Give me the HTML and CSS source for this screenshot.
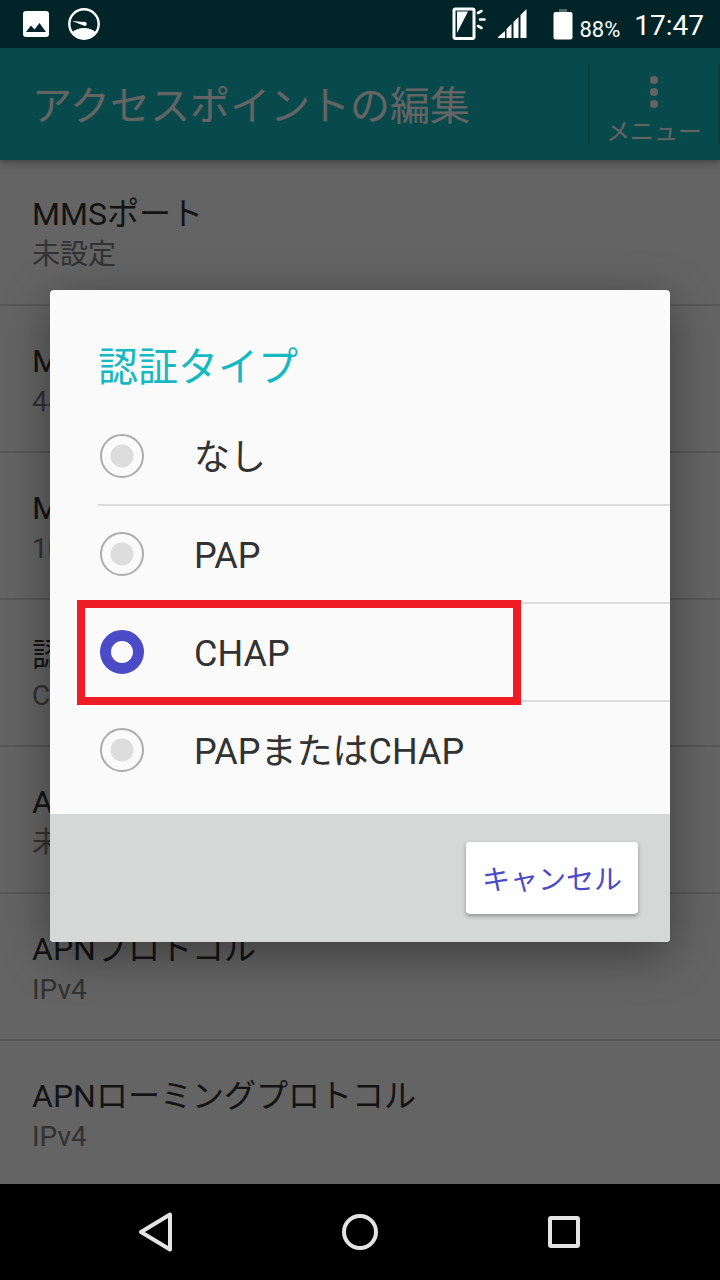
FILE: index.html
```html
<!DOCTYPE html>
<html lang="ja">
<head>
<meta charset="utf-8">
<meta name="viewport" content="width=device-width, initial-scale=1">
<title>アクセスポイントの編集</title>
<link rel="stylesheet" href="styles.css">
</head>
<body>
<div class="phone">
  <div class="status-bar">
    <div class="status-group">
      <svg class="status-icon" width="28" height="28" viewBox="0 0 28 28" aria-hidden="true">
        <rect x="1" y="1" width="26" height="26" rx="3" fill="#fff"/>
        <path d="M4 22L9 15.500L12.500 19.500L17.500 13L24 22Z" fill="#002428"/>
      </svg>
      <svg class="status-icon" width="32" height="32" viewBox="0 0 32 32" aria-hidden="true">
        <circle cx="16" cy="16" r="14.700" fill="none" stroke="#fff" stroke-width="2.400"/>
        <path d="M4.500 24Q9.500 20 16 20T27.500 24Q23 31 16 31T4.500 24Z" fill="#fff"/>
        <path d="M4 13L16 14A2 2 0 1 1 15.500 17.500Z" fill="#fff"/>
      </svg>
    </div>
    <div class="status-group status-right">
      <svg width="34" height="34" viewBox="0 0 34 34" aria-hidden="true">
        <rect x="2" y="2" width="20" height="29.500" rx="1.500" fill="none" stroke="#fff" stroke-width="3"/>
        <path d="M5 4.500H16L5 26Z" fill="#fff"/>
        <path d="M26 6L29.500 4M28 12.500H32.500M26 19L29.500 21" stroke="#fff" stroke-width="2.600" stroke-linecap="round"/>
      </svg>
      <svg class="signal" width="30" height="30" viewBox="0 0 30 30" aria-hidden="true">
        <path d="M0 29V28L7 22V29ZM8.500 29V20L13.500 15V29ZM15.500 29V13L20.500 8V29ZM22.500 29V6L28.500 0V29Z" fill="#fff"/>
      </svg>
      <svg class="battery" width="20" height="32" viewBox="0 0 20 32" aria-hidden="true">
        <rect x="6" y="1" width="8" height="4" fill="#4d666a"/>
        <rect x="0.500" y="4" width="19" height="27.500" rx="2" fill="#fff"/>
      </svg>
      <span class="battery-level">88%</span>
      <time class="clock">17:47</time>
    </div>
  </div>

  <main class="screen">
    <header class="app-bar">
      <h1 class="app-title">アクセスポイントの編集</h1>
      <button class="menu-button" type="button">
        <svg class="menu-dots" width="8" height="32" viewBox="0 0 8 32" aria-hidden="true">
          <circle cx="4" cy="4" r="4" fill="#fafafa"/><circle cx="4" cy="16" r="4" fill="#fafafa"/><circle cx="4" cy="28" r="4" fill="#fafafa"/>
        </svg>
        <span>メニュー</span>
      </button>
    </header>
    <ul class="settings">
      <li class="setting"><span class="setting-name">MMSポート</span><span class="setting-value">未設定</span></li>
      <li class="setting"><span class="setting-name">MCC</span><span class="setting-value">440</span></li>
      <li class="setting"><span class="setting-name">MNC</span><span class="setting-value">10</span></li>
      <li class="setting"><span class="setting-name">認証タイプ</span><span class="setting-value">CHAP</span></li>
      <li class="setting"><span class="setting-name">APNタイプ</span><span class="setting-value">未設定</span></li>
      <li class="setting"><span class="setting-name">APNプロトコル</span><span class="setting-value">IPv4</span></li>
      <li class="setting"><span class="setting-name">APNローミングプロトコル</span><span class="setting-value">IPv4</span></li>
    </ul>

    <div class="scrim">
      <form class="dialog" role="dialog" aria-labelledby="dialog-title">
        <h2 class="dialog-title" id="dialog-title">認証タイプ</h2>
        <div class="options">
          <label class="option"><input class="radio" type="radio" name="auth"><span class="option-label">なし</span></label>
          <label class="option"><input class="radio" type="radio" name="auth"><span class="option-label">PAP</span></label>
          <label class="option option-marked"><input class="radio" type="radio" name="auth" checked><span class="option-label">CHAP</span></label>
          <label class="option"><input class="radio" type="radio" name="auth"><span class="option-label">PAPまたはCHAP</span></label>
        </div>
        <div class="dialog-actions">
          <button class="cancel" type="button">キャンセル</button>
        </div>
      </form>
    </div>
  </main>

  <nav class="nav-bar">
    <button class="nav-button" type="button" aria-label="戻る">
      <svg width="40" height="44" viewBox="0 0 40 44" aria-hidden="true"><path d="M5 22L34 4.500V39.500Z" fill="none" stroke="#e4e4e4" stroke-width="4" stroke-linejoin="round"/></svg>
    </button>
    <button class="nav-button" type="button" aria-label="ホーム">
      <svg width="40" height="44" viewBox="0 0 40 44" aria-hidden="true"><circle cx="20" cy="22" r="16" fill="none" stroke="#e4e4e4" stroke-width="4"/></svg>
    </button>
    <button class="nav-button" type="button" aria-label="履歴">
      <svg width="40" height="44" viewBox="0 0 40 44" aria-hidden="true"><rect x="6" y="8" width="28" height="28" rx="1" fill="none" stroke="#e4e4e4" stroke-width="4"/></svg>
    </button>
  </nav>
</div>
</body>
</html>
```

FILE: styles.css
```css
* {
  box-sizing: border-box;
}

body {
  margin: 0;
  font-family: Roboto, "Noto Sans CJK JP", sans-serif;
}

button {
  margin: 0;
  padding: 0;
  border: 0;
  background: none;
  font: inherit;
  color: inherit;
}

.phone {
  display: flex;
  flex-direction: column;
  height: 100vh;
}

/* Status bar */
.status-bar {
  display: flex;
  justify-content: space-between;
  align-items: center;
  height: 48px;
  padding: 0 16px 0 22px;
  background: #002428;
  color: #fff;
}

.status-group {
  display: flex;
  align-items: center;
  gap: 18px;
}

.status-right {
  gap: 0;
}

.signal {
  margin-left: 12px;
}

.battery {
  margin-left: 25px;
}

.battery-level {
  margin: 12px 0 0 6px;
  font-size: 22px;
  line-height: 24px;
}

.clock {
  padding-top: 4px;
  margin-left: 14px;
  font-size: 28px;
  line-height: 32px;
}

/* Screen behind the dialog */
.screen {
  position: relative;
  display: flex;
  flex: 1;
  flex-direction: column;
  min-height: 0;
  overflow: hidden;
  background: #fafafa;
}

.app-bar {
  position: relative;
  display: flex;
  flex: none;
  align-items: center;
  justify-content: space-between;
  height: 112px;
  padding-left: 32px;
  background: #16b9bc;
  color: #fafafa;
  box-shadow: 0 2px 8px rgba(0, 0, 0, 0.4);
}

.app-title {
  margin: 0;
  padding-top: 6px;
  font-size: 40px;
  font-weight: 400;
  line-height: 56px;
}

.menu-button {
  display: flex;
  flex-direction: column;
  align-items: center;
  height: 80px;
  padding: 12px 16px 0;
  border-left: 2px solid #129da0;
  border-right: 2px solid #129da0;
  font-size: 24px;
  line-height: 32px;
}

.menu-dots {
  flex: none;
  margin-bottom: 8px;
}

.settings {
  margin: -1px 0 0;
  padding: 0;
  list-style: none;
}

.setting {
  display: flex;
  flex-direction: column;
  height: 147px;
  padding: 34px 32px 0;
  border-bottom: 2px solid #dadada;
}

.setting-name {
  font-size: 32px;
  line-height: 42px;
  color: #323232;
}

.setting-value {
  font-size: 28px;
  line-height: 40px;
  color: #7d7d7d;
}

/* Dialog */
.scrim {
  position: absolute;
  inset: 0;
  display: flex;
  align-items: center;
  justify-content: center;
  padding: 0 50px;
  background: rgba(0, 0, 0, 0.6);
}

.dialog {
  width: 100%;
  border-radius: 4px;
  background: #fafafa;
  box-shadow: 0 12px 48px rgba(0, 0, 0, 0.4);
}

.dialog-title {
  margin: 0;
  padding: 50px 48px 12px;
  font-size: 40px;
  font-weight: 400;
  line-height: 56px;
  color: #16b9c1;
}

.options {
  padding: 0 0 16px 48px;
}

.option {
  position: relative;
  display: flex;
  align-items: center;
  gap: 50px;
  height: 98px;
  padding-left: 2px;
  border-bottom: 2px solid #dcdcdc;
  font-size: 36px;
  line-height: 48px;
  color: #323232;
}

.option:last-child {
  height: 96px;
  border-bottom: 0;
}

.option-label {
  padding-top: 4px;
}

.option-marked::after {
  content: "";
  position: absolute;
  inset: -4px 149px -5px -21px;
  z-index: 1;
  border: 8px solid #ee1c24;
  pointer-events: none;
}

.radio {
  appearance: none;
  flex: none;
  width: 44px;
  height: 44px;
  margin: 0;
  border: 2px solid #acacac;
  border-radius: 50%;
  background: radial-gradient(circle, #dcdcdc 11px, transparent 12px);
}

.radio:checked {
  border: 11px solid #4b4bc8;
  background: none;
}

.dialog-actions {
  display: flex;
  justify-content: flex-end;
  padding: 28px 32px;
  border-radius: 0 0 4px 4px;
  background: #d6d8d7;
}

.cancel {
  height: 72px;
  padding: 0 16px;
  border-radius: 4px;
  background: #fff;
  box-shadow: 0 2px 4px rgba(0, 0, 0, 0.35);
  font-size: 28px;
  color: #4b4bc8;
}

/* Navigation bar */
.nav-bar {
  display: flex;
  align-items: center;
  justify-content: space-between;
  height: 96px;
  padding: 0 136px;
  background: #000;
}

.nav-button {
  display: flex;
}
```
